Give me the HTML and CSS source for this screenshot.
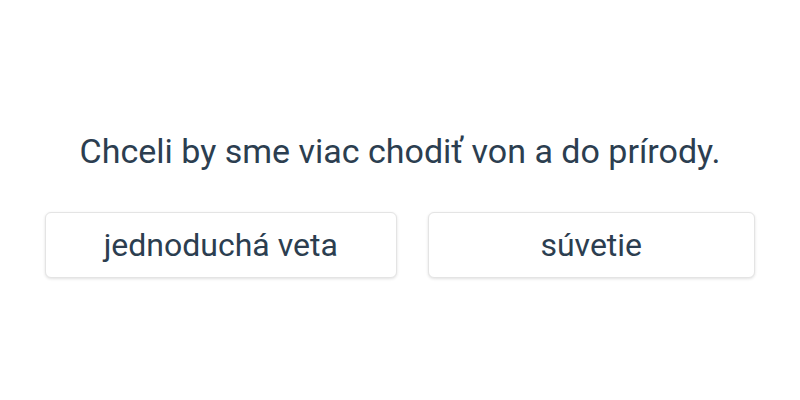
FILE: index.html
```html
<!DOCTYPE html>
<html lang="sk">
<head>
<meta charset="utf-8">
<link rel="stylesheet" href="styles.css">
</head>
<body>
<main class="quiz">
  <p class="question">Chceli by sme viac chodiť von a do prírody.</p>
  <div class="answers">
    <button class="answer">jednoduchá veta</button>
    <button class="answer">súvetie</button>
  </div>
</main>
</body>
</html>
```

FILE: styles.css
```css
html, body {
  margin: 0;
  padding: 0;
  background: #fff;
}
body {
  width: 800px;
  height: 400px;
  font-family: Roboto, "Liberation Sans", sans-serif;
  color: #2c3e50;
}
.quiz {
  display: flex;
  flex-direction: column;
  align-items: center;
  padding-top: 129px;
}
.question {
  margin: 0;
  font-size: 34px;
  line-height: 44px;
}
.answers {
  margin-top: 39px;
  width: 710px;
  display: grid;
  grid-template-columns: 351fr 327fr;
  column-gap: 31px;
}
.answer {
  height: 66px;
  font-family: inherit;
  font-size: 32px;
  color: #2c3e50;
  background: #fff;
  border: 1px solid #e4e4e4;
  border-radius: 6px;
  box-shadow: 0 1px 3px rgba(0, 0, 0, 0.12);
  padding: 0;
}
```
